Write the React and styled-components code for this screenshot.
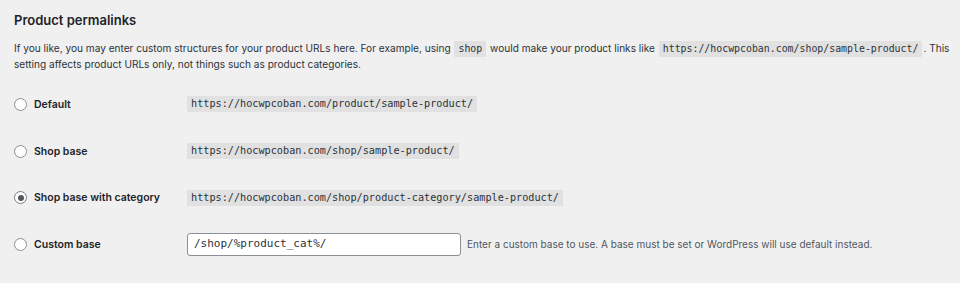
import React from "react";
import styled, { createGlobalStyle } from "styled-components";

const GlobalStyle = createGlobalStyle`
  html, body {
    margin: 0;
    padding: 0;
    background: #f0f0f1;
  }
  body {
    font-family: Inter, "Liberation Sans", Arial, sans-serif;
    color: #1d2327;
  }
`;

const StyledPermalinks = styled.section`
  padding: 0 4px 0 14px;
  width: 960px;
  height: 283px;
  box-sizing: border-box;
  overflow: hidden;

  h2 {
    margin: 12px 0 0;
    font-size: 13px;
    font-weight: 600;
    line-height: 17px;
  }
`;

const Intro = styled.p`
  margin: 12px 0 0;
  font-size: 10.1px;
  line-height: 15.5px;
  color: #2c3338;
`;

const Code = styled.code`
  font-family: "DejaVu Sans Mono", "Liberation Mono", monospace;
  font-size: ${({ $small }) => ($small ? "9.9px" : "10.2px")};
  background: rgba(0, 0, 0, 0.06);
  padding: 2px 4px 3px;
  margin: 0 1px;
  color: #2c3338;
`;

const Options = styled.div`
  margin-top: 9px;
  display: grid;
  grid-template-columns: 173px 1fr;
  grid-auto-rows: 46.7px;
  align-items: center;
`;

const Label = styled.label`
  display: flex;
  align-items: center;
  gap: 7px;
  font-size: 10.5px;
  font-weight: 600;
  color: #1d2327;
`;

const Radio = styled.span`
  width: 13px;
  height: 13px;
  border-radius: 50%;
  border: 1px solid ${({ $checked }) => ($checked ? "#787c82" : "#8c8f94")};
  background: #fff;
  box-sizing: border-box;
  display: flex;
  align-items: center;
  justify-content: center;

  &::after {
    content: "";
    display: ${({ $checked }) => ($checked ? "block" : "none")};
    width: 6px;
    height: 6px;
    border-radius: 50%;
    background: #50575e;
  }
`;

const Value = styled.div`
  display: flex;
  align-items: center;

  ${Code} {
    margin: 0;
  }
`;

const Input = styled.input`
  width: 274px;
  height: 23px;
  box-sizing: border-box;
  border: 1px solid #8c8f94;
  border-radius: 3px;
  background: #fff;
  padding: 2px 6px 3px;
  font-family: "DejaVu Sans Mono", "Liberation Mono", monospace;
  font-size: 11px;
  line-height: normal;
  color: #2c3338;
  outline: none;
`;

const Hint = styled.span`
  margin-left: 6px;
  font-size: 10px;
  color: #50575e;
`;

const options = [
  { id: "default", label: "Default", url: "https://hocwpcoban.com/product/sample-product/" },
  { id: "shop", label: "Shop base", url: "https://hocwpcoban.com/shop/sample-product/" },
  {
    id: "category",
    label: "Shop base with category",
    url: "https://hocwpcoban.com/shop/product-category/sample-product/",
    checked: true,
  },
];

const App = () => {
  return (
    <>
      <GlobalStyle />
      <StyledPermalinks>
        <h2>Product permalinks</h2>
        <Intro>
          If you like, you may enter custom structures for your product URLs here. For example, using{" "}
          <Code $small>shop</Code> would make your product links like{" "}
          <Code $small>https://hocwpcoban.com/shop/sample-product/</Code>. This setting affects product URLs
          only, not things such as product categories.
        </Intro>
        <Options>
          {options.map(({ id, label, url, checked }) => (
            <React.Fragment key={id}>
              <Label>
                <Radio $checked={checked} />
                {label}
              </Label>
              <Value>
                <Code>{url}</Code>
              </Value>
            </React.Fragment>
          ))}
          <Label>
            <Radio />
            Custom base
          </Label>
          <Value>
            <Input defaultValue="/shop/%product_cat%/" />
            <Hint>Enter a custom base to use. A base must be set or WordPress will use default instead.</Hint>
          </Value>
        </Options>
      </StyledPermalinks>
    </>
  );
};

export default App;
